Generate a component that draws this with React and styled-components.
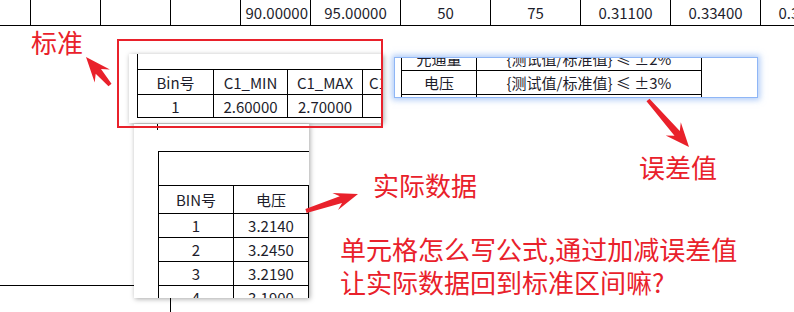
import styled, { createGlobalStyle } from 'styled-components';

const FONT = `"Noto Sans CJK SC", "Noto Sans", sans-serif`;
const RED = '#e9212b';
const INK = '#1d1d2b';

const GlobalStyle = createGlobalStyle`
  html, body {
    margin: 0;
    padding: 0;
    background: #fff;
  }
  body {
    width: 794px;
    height: 312px;
    overflow: hidden;
  }
  * { box-sizing: border-box; }
`;

// 上面那一行的数值
const topCells = [
  { v: '' }, { v: '' }, { v: '' }, { v: '' },
  { v: '90.00000', align: 'flex-end' },
  { v: '95.00000' }, { v: '50' }, { v: '75' },
  { v: '0.31100' }, { v: '0.33400' }, { v: '0.35600' },
];

const actualRows = [
  ['1', '3.2140'],
  ['2', '3.2450'],
  ['3', '3.2190'],
  ['4', '3.1900'],
];

const arrows = [
  { from: [110, 85], to: [86, 57], head: 23, half: 10 },
  { from: [306, 211], to: [358, 194], head: 22, half: 9 },
  { from: [648, 100], to: [689, 147], head: 22, half: 10 },
];

function arrowPoints({ from, to, head, half }) {
  const [x1, y1] = from;
  const [x2, y2] = to;
  const len = Math.hypot(x2 - x1, y2 - y1);
  const ux = (x2 - x1) / len;
  const uy = (y2 - y1) / len;
  const nx = -uy;
  const ny = ux;
  const bx = x2 - ux * head;
  const by = y2 - uy * head;
  const p = (x, y) => `${x.toFixed(1)},${y.toFixed(1)}`;
  return [
    p(x1 + nx * 2, y1 + ny * 2),
    p(bx + ux * 4 + nx * 3.5, by + uy * 4 + ny * 3.5),
    p(bx - ux * 2 + nx * half, by - uy * 2 + ny * half),
    p(x2, y2),
    p(bx - ux * 2 - nx * half, by - uy * 2 - ny * half),
    p(bx + ux * 4 - nx * 3.5, by + uy * 4 - ny * 3.5),
    p(x1 - nx * 2, y1 - ny * 2),
  ].join(' ');
}

const App = () => {
  return (
    <>
      <GlobalStyle />
      <Sheet>
        <TopRow>
          {topCells.map((c, i) => (
            <SheetCell key={i} $align={c.align}>{c.v}</SheetCell>
          ))}
        </TopRow>
        <BottomRow>
          <BottomCell />
        </BottomRow>

        {/* 标准 截图 */}
        <Picture $x={129} $y={54} $w={254} $h={69}>
          <StdTable>
            <BlankRow $h={16} />
            <Cell $h={25}>Bin号</Cell>
            <Cell $h={25}>C1_MIN</Cell>
            <Cell $h={25}>C1_MAX</Cell>
            <Cell $h={25} $clip>C1_TYP</Cell>
            <Cell $h={23}>1</Cell>
            <Cell $h={23}>2.60000</Cell>
            <Cell $h={23}>2.70000</Cell>
            <Cell $h={23}></Cell>
          </StdTable>
        </Picture>

        {/* 误差值 截图 */}
        <Picture $x={395} $y={58} $w={362} $h={39} $glow>
          <TolTable>
            <Cell $h={24}>光通量</Cell>
            <Cell $h={24}>{'{测试值/标准值} ≤ ±2%'}</Cell>
            <Cell $h={24}>电压</Cell>
            <Cell $h={24}>{'{测试值/标准值} ≤ ±3%'}</Cell>
            <Cell $h={24}></Cell>
            <Cell $h={24}></Cell>
          </TolTable>
        </Picture>

        {/* 实际数据 截图 */}
        <Picture $x={134} $y={124} $w={175} $h={174}>
          <Tick />
          <DataTable>
            <BlankRow $h={34} />
            <Cell $h={28}>BIN号</Cell>
            <Cell $h={28}>电压</Cell>
            {actualRows.map(([bin, volt]) => (
              <Row key={bin}>
                <Cell $h={24}>{bin}</Cell>
                <Cell $h={24}>{volt}</Cell>
              </Row>
            ))}
          </DataTable>
        </Picture>

        <RedFrame />

        <Note $x={31} $y={25}>标准</Note>
        <Note $x={639} $y={150}>误差值</Note>
        <Note $x={373} $y={168}>实际数据</Note>
        <Note $x={340} $y={232}>
          单元格怎么写公式,通过加减误差值
          <br />
          让实际数据回到标准区间嘛?
        </Note>

        <Overlay viewBox="0 0 794 312">
          {arrows.map((a, i) => (
            <polygon key={i} points={arrowPoints(a)} fill={RED} />
          ))}
        </Overlay>
      </Sheet>
    </>
  );
};

export default App;

const Sheet = styled.div`
  position: relative;
  width: 794px;
  height: 312px;
  overflow: hidden;
  font-family: ${FONT};
  color: ${INK};
`;

const TopRow = styled.div`
  display: grid;
  grid-template-columns: 31px repeat(4, 70px) repeat(6, 90px);
  height: 26px;
  border-bottom: 1px solid #000;
`;

const SheetCell = styled.div`
  display: flex;
  align-items: center;
  justify-content: ${(p) => p.$align || 'center'};
  padding: 0 2px 1px;
  border-right: 1px solid #000;
  font-size: 15px;
  white-space: nowrap;
  overflow: hidden;
`;

const BottomRow = styled.div`
  display: grid;
  grid-template-columns: 171px 1fr;
  margin-top: 259px;
`;

const BottomCell = styled.div`
  height: 28px;
  border-top: 1px solid #000;
  border-right: 1px solid #000;
`;

const Picture = styled.div`
  position: absolute;
  left: ${(p) => p.$x}px;
  top: ${(p) => p.$y}px;
  width: ${(p) => p.$w}px;
  height: ${(p) => p.$h}px;
  overflow: hidden;
  background: #fff;
  box-shadow: ${(p) =>
    p.$glow
      ? '0 0 0 1px rgba(140, 180, 245, 0.95), 0 0 6px 3px rgba(110, 160, 240, 0.55)'
      : '1px 1px 5px rgba(0, 0, 0, 0.35)'};
`;

const StdTable = styled.div`
  display: grid;
  grid-template-columns: 76px 74px 75px 80px;
  margin-left: 8px;
  border-left: 1px solid #000;
`;

const TolTable = styled.div`
  display: grid;
  grid-template-columns: 75px 225px;
  width: 301px;
  margin: -11px 0 0 6px;
  border-left: 1px solid #000;
`;

const Tick = styled.div`
  width: 1px;
  height: 6px;
  margin-left: 23px;
  background: #000;
`;

const DataTable = styled.div`
  display: grid;
  grid-template-columns: 75px 75px;
  width: 151px;
  margin: 21px 0 0 24px;
  border-top: 1px solid #000;
  border-left: 1px solid #000;
`;

const Row = styled.div`
  display: contents;
`;

const BlankRow = styled.div`
  grid-column: 1 / -1;
  height: ${(p) => p.$h}px;
  border-bottom: 1px solid #000;
`;

const Cell = styled.div`
  display: flex;
  align-items: center;
  justify-content: ${(p) => (p.$clip ? 'flex-start' : 'center')};
  height: ${(p) => p.$h}px;
  padding: ${(p) => (p.$clip ? '0 0 0 6px' : '0')};
  border-right: 1px solid #000;
  border-bottom: 1px solid #000;
  font-size: 15px;
  white-space: nowrap;
  overflow: hidden;
`;

const RedFrame = styled.div`
  position: absolute;
  left: 117px;
  top: 39px;
  width: 266px;
  height: 89px;
  border: 2px solid ${RED};
`;

const Note = styled.div`
  position: absolute;
  left: ${(p) => p.$x}px;
  top: ${(p) => p.$y}px;
  color: ${RED};
  font-size: 26px;
  line-height: 33px;
  white-space: nowrap;
`;

const Overlay = styled.svg`
  position: absolute;
  left: 0;
  top: 0;
  width: 794px;
  height: 312px;
  pointer-events: none;
`;
